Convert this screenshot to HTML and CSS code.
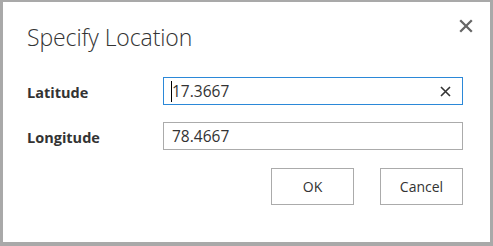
FILE: index.html
```html
<!DOCTYPE html>
<html>
<head>
<meta charset="utf-8">
<link rel="stylesheet" href="styles.css">
</head>
<body>
<div class="dialog">
  <div class="header">
    <h1 class="title">Specify Location</h1>
    <button class="close" aria-label="Close">
      <svg width="14" height="14" viewBox="0 0 14 14"><path d="M1.2 1.2L12.8 12.8M12.8 1.2L1.2 12.8" stroke="#666" stroke-width="2.3" fill="none"/></svg>
    </button>
  </div>
  <div class="form">
    <div class="label">Latitude</div>
    <div class="field focused">
      <span class="caret"></span><span class="value">17.3667</span>
      <span class="clear"><svg width="11" height="11" viewBox="0 0 11 11"><path d="M1 1L10 10M10 1L1 10" stroke="#333" stroke-width="1.6" fill="none"/></svg></span>
    </div>
    <div class="label">Longitude</div>
    <div class="field">
      <span class="value">78.4667</span>
    </div>
  </div>
  <div class="actions">
    <button class="btn">OK</button>
    <button class="btn">Cancel</button>
  </div>
</div>
</body>
</html>
```

FILE: styles.css
```css
html, body {
  margin: 0;
  padding: 0;
}
body {
  background: #a9a9a9;
  width: 493px;
  height: 246px;
  overflow: hidden;
  font-family: "Open Sans", "Noto Sans", sans-serif;
  color: #333;
}
.dialog {
  margin: 2px 3px 0 3px;
  width: 487px;
  height: 240px;
  background: #fff;
  box-sizing: border-box;
  padding: 0 27px 0 24px;
}
.header {
  display: flex;
  justify-content: space-between;
  align-items: flex-start;
  height: 75px;
}
.title {
  margin: 0;
  padding-top: 19px;
  font-size: 23px;
  font-weight: 300;
  line-height: 32px;
  color: #333;
  letter-spacing: -0.1px;
}
.close {
  border: 0;
  background: none;
  padding: 0;
  margin: 17px -10px 0 0;
  width: 14px;
  height: 14px;
  display: flex;
}
.form {
  display: grid;
  grid-template-columns: 136px 300px;
  grid-auto-rows: 28px;
  row-gap: 17px;
  align-items: center;
}
.label {
  font-weight: 700;
  font-size: 14.5px;
  color: #333;
  padding-top: 3px;
}
.field {
  height: 28px;
  box-sizing: border-box;
  border: 1px solid #ababab;
  display: flex;
  align-items: center;
  padding-left: 8px;
  padding-right: 11px;
  font-size: 15.5px;
  color: #333;
}
.field.focused {
  border-color: #2b88d8;
  padding-left: 7px;
}
.caret {
  width: 1px;
  height: 21px;
  background: #000;
}
.value {
  flex: 1;
}
.clear {
  display: flex;
}
.actions {
  display: flex;
  justify-content: flex-end;
  gap: 26px;
  margin-top: 18px;
}
.btn {
  width: 83px;
  height: 37px;
  border: 1px solid #ababab;
  background: #fff;
  font-family: "Open Sans", "Noto Sans", sans-serif;
  font-size: 14px;
  color: #333;
  padding: 0;
}
```
